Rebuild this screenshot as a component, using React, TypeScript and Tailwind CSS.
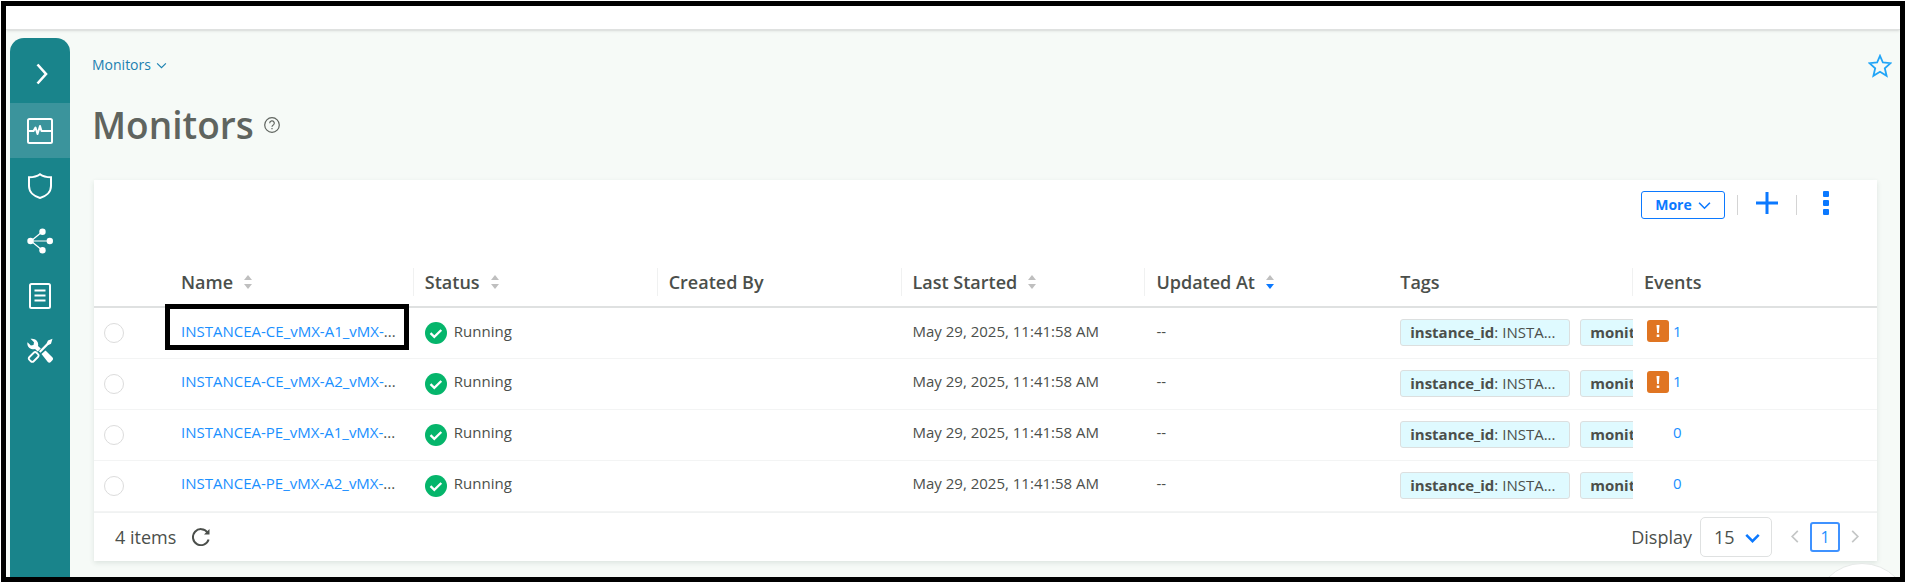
import type { ReactNode } from 'react';

interface Monitor {
  name: string;
  started: string;
  events: number;
}

const monitors: Monitor[] = [
  { name: 'INSTANCEA-CE_vMX-A1_vMX-', started: 'May 29, 2025, 11:41:58 AM', events: 1 },
  { name: 'INSTANCEA-CE_vMX-A2_vMX-', started: 'May 29, 2025, 11:41:58 AM', events: 1 },
  { name: 'INSTANCEA-PE_vMX-A1_vMX-', started: 'May 29, 2025, 11:41:58 AM', events: 0 },
  { name: 'INSTANCEA-PE_vMX-A2_vMX-', started: 'May 29, 2025, 11:41:58 AM', events: 0 },
];

interface Column {
  label: string;
  sort?: 'none' | 'desc';
  divider?: boolean;
}

const columns: Column[] = [
  { label: 'Name', sort: 'none', divider: true },
  { label: 'Status', sort: 'none', divider: true },
  { label: 'Created By', divider: true },
  { label: 'Last Started', sort: 'none', divider: true },
  { label: 'Updated At', sort: 'desc' },
  { label: 'Tags', divider: true },
  { label: 'Events' },
];

function Chevron({ className, width = 2 }: { className: string; width?: number }) {
  return (
    <svg className={className} viewBox="0 0 12 8" fill="none" stroke="currentColor" strokeWidth={width}>
      <path d="M1 1.5l5 5 5-5" />
    </svg>
  );
}

function SortIcon({ sort }: { sort: 'none' | 'desc' }) {
  return (
    <svg className="h-[14px] w-[10px]" viewBox="0 0 10 14">
      <path d="M5 0l4 5H1z" fill="#bfbfbf" />
      <path d="M5 14L1 9h8z" fill={sort === 'desc' ? '#0b79ff' : '#bfbfbf'} />
    </svg>
  );
}

function SideItem({ label, active, children }: { label: string; active?: boolean; children: ReactNode }) {
  return (
    <a
      href="#"
      aria-label={label}
      className={`flex h-[55px] items-center justify-center text-white ${active ? 'bg-[#3b949c]' : ''}`}
    >
      {children}
    </a>
  );
}

function Sidebar() {
  return (
    <nav className="flex w-[60px] shrink-0 flex-col rounded-t-[14px] bg-[#19848b]">
      <button type="button" aria-label="Expand" className="flex h-[65px] items-center justify-center pt-[6px] pl-1 text-white">
        <svg className="h-[22px] w-[12px]" viewBox="0 0 12 22" fill="none" stroke="currentColor" strokeWidth="2.6">
          <path d="M1.5 1.500L10 11l-8.500 9.500" />
        </svg>
      </button>
      <SideItem label="Monitors" active>
        <svg className="h-[26px] w-[26px]" viewBox="0 0 26 26" fill="none" stroke="currentColor" strokeWidth="2">
          <rect x="1" y="1" width="24" height="24" rx="1.500" />
          <path d="M1 13h5.500l2-3.500 2 6.500 2.500-8 1.500 5H25" strokeLinejoin="round" />
        </svg>
      </SideItem>
      <SideItem label="Security">
        <svg className="h-[26px] w-[24px]" viewBox="0 0 24 26" fill="none" stroke="currentColor" strokeWidth="2">
          <path d="M12 1.200c3 2.200 7 3 11 3V13c0 6.500-5.500 10.500-11 12C6.500 23.500 1 19.500 1 13V4.200c4 0 8-.8 11-3z" />
        </svg>
      </SideItem>
      <SideItem label="Topology">
        <svg className="h-[26px] w-[26px]" viewBox="0 0 26 26" stroke="currentColor" fill="currentColor">
          <path d="M4 13L15.500 3.500M4 13h18M4 13l11.500 9.500" strokeWidth="1.200" />
          <g stroke="none">
            <circle cx="3.500" cy="13" r="3.200" />
            <circle cx="15.500" cy="3.700" r="3.200" />
            <circle cx="22.800" cy="13" r="3.200" />
            <circle cx="15.500" cy="22.300" r="3.200" />
          </g>
        </svg>
      </SideItem>
      <SideItem label="Reports">
        <svg className="h-[26px] w-[22px]" viewBox="0 0 22 26" fill="none" stroke="currentColor" strokeWidth="2">
          <rect x="1" y="1" width="20" height="24" rx="1.500" />
          <path d="M5.500 7.500h11M5.500 12.500h11M5.500 17.500h11" strokeWidth="2.200" />
        </svg>
      </SideItem>
      <SideItem label="Tools">
        <svg className="h-[26px] w-[26px]" viewBox="0 0 26 26">
          <path
            fill="currentColor"
            d="M3.500.8L7 4.300 6.500 7 3.900 7.500.5 4.200C-.3 7.500 1.800 11 5.500 11.300c1 .1 1.800-.1 2.500-.4l2.800 2.700 3-3-2.800-2.700c1-3.800-2-8-7.500-7.100z"
          />
          <path fill="currentColor" d="M14.500 16l4-3.500 6.800 6.800c1 1 1 2 .1 3l-1.600 1.600c-1 1-2 1-3 0z" />
          <path fill="currentColor" d="M25.500.8l-1.500 5-3 1.400-7.500 7.500-1.600-1.500 7.600-7.600 1.500-3z" />
          <rect x="1.700" y="16" width="10" height="6" rx="2" transform="rotate(-45 6.700 19)" fill="none" stroke="currentColor" strokeWidth="1.800" />
        </svg>
      </SideItem>
    </nav>
  );
}

function Toolbar() {
  return (
    <div className="flex h-[88px] items-start justify-end pt-[11px] pr-12 text-[#0b79ff]">
      <button
        type="button"
        className="flex h-7 w-[84px] items-center justify-center gap-[6px] rounded-[3px] border border-[#0b79ff] text-sm font-bold"
      >
        More
        <Chevron className="h-[9px] w-[13px]" width={1.5} />
      </button>
      <div className="mt-1 ml-3 h-5 w-px bg-[#d4d4d4]" />
      <button type="button" aria-label="Add" className="ml-[18px]">
        <svg className="h-6 w-[22px]" viewBox="0 0 22 24" stroke="currentColor" strokeWidth="3">
          <path d="M0 12h22M11 1v22" />
        </svg>
      </button>
      <div className="mt-1 ml-[18px] h-5 w-px bg-[#d4d4d4]" />
      <button type="button" aria-label="Options" className="ml-[26px]">
        <svg className="h-6 w-[6px]" viewBox="0 0 6 24" fill="currentColor">
          <rect y="0" width="6" height="6" rx="1" />
          <rect y="9" width="6" height="6" rx="1" />
          <rect y="18" width="6" height="6" rx="1" />
        </svg>
      </button>
    </div>
  );
}

function Tag({ name, value }: { name: string; value?: string }) {
  return (
    <div className="h-[27px] w-[170px] shrink-0 rounded-[3px] border border-[#dcdfdf] bg-[#dffaff] px-[9px] leading-[25px] whitespace-nowrap">
      <b>{name}</b>
      {value && `: ${value}`}
    </div>
  );
}

function MonitorRow({ monitor, highlighted }: { monitor: Monitor; highlighted: boolean }) {
  return (
    <tr className="h-[51px] border-b border-[#f3f4f4] text-[15px] text-[#4b4f4b]">
      <td>
        <input
          type="radio"
          name="monitor"
          aria-label={monitor.name}
          className="ml-[10px] block h-5 w-5 appearance-none rounded-full border border-[#dcdcdc] bg-white"
        />
      </td>
      <td className="relative pb-1 pl-[11px] whitespace-nowrap">
        <a href="#" className="text-[#1a90ff]">
          {monitor.name}
        </a>
        ...
        {highlighted && (
          <div className="pointer-events-none absolute -top-1 right-[5px] -left-[5px] h-[46px] border-[5px] border-black" />
        )}
      </td>
      <td className="pl-[11px]">
        <div className="flex items-center gap-[7px]">
          <svg className="h-[22px] w-[22px]" viewBox="0 0 22 22">
            <circle cx="11" cy="11" r="11" fill="#05b56b" />
            <path d="M5.500 11.200l3.800 3.600 7-6.800" fill="none" stroke="#fff" strokeWidth="2.300" />
          </svg>
          <span className="pb-1">Running</span>
        </div>
      </td>
      <td />
      <td className="pb-1 pl-[11px] whitespace-nowrap">{monitor.started}</td>
      <td className="pb-1 pl-[11px]">--</td>
      <td className="pl-[11px]">
        <div className="flex gap-[10px] overflow-hidden">
          <Tag name="instance_id" value="INSTA..." />
          <Tag name="monitor" />
        </div>
      </td>
      <td className="pb-1 pl-[14px]">
        <div className="flex items-center gap-1">
          <div className="h-[22px] w-[22px]">
            {monitor.events > 0 && (
              <svg className="h-[22px] w-[22px]" viewBox="0 0 22 22">
                <rect width="22" height="22" rx="3" fill="#e07522" />
                <path d="M9.500 5h3l-.6 8h-1.800z" fill="#fff" />
                <rect x="9.700" y="14.500" width="2.600" height="2.500" fill="#fff" />
              </svg>
            )}
          </div>
          <a href="#" className="text-[#1a90ff]">
            {monitor.events}
          </a>
        </div>
      </td>
    </tr>
  );
}

function Footer() {
  return (
    <div className="flex h-[49px] items-center border-t border-[#f0f2f2] pr-[15px] pl-[21px] text-lg text-[#4b4f4b]">
      <span>4 items</span>
      <button type="button" aria-label="Refresh" className="ml-4">
        <svg className="h-[18px] w-[18px]" viewBox="0 0 18 18" fill="none" stroke="currentColor" strokeWidth="2">
          <path d="M15.500 4.500A8 8 0 1 0 16.600 11.500" />
          <path d="M17.500 1v5.500H12z" fill="currentColor" stroke="none" />
        </svg>
      </button>
      <label htmlFor="page-size" className="ml-auto">
        Display
      </label>
      <div className="relative ml-2 h-10 w-[72px]">
        <select id="page-size" className="h-10 w-[72px] appearance-none rounded-[5px] border border-[#dfe1e1] bg-white pl-[13px]">
          <option>15</option>
        </select>
        <Chevron className="pointer-events-none absolute top-4 right-3 h-[10px] w-[15px] text-[#0b79ff]" />
      </div>
      <button type="button" aria-label="Previous page" className="ml-4 text-[#c4c6c6]">
        <Chevron className="h-[9px] w-[14px] rotate-90" width={1.5} />
      </button>
      <button
        type="button"
        className="ml-2 flex h-[30px] w-[30px] items-center justify-center rounded-[3px] border-2 border-[#3f92ff] text-base text-[#1a90ff]"
      >
        1
      </button>
      <button type="button" aria-label="Next page" className="ml-2 text-[#c4c6c6]">
        <Chevron className="h-[9px] w-[14px] -rotate-90" width={1.5} />
      </button>
    </div>
  );
}

export default function App() {
  return (
    <div className="h-screen bg-white p-px font-['Open_Sans','Noto_Sans',sans-serif]">
      <div className="relative flex h-full flex-col overflow-hidden border-[5px] border-black bg-[#f6faf7]">
        <header className="h-6 shrink-0 border-b border-[#dfe1e0] bg-white shadow-sm" />
        <div className="flex grow pt-2 pl-1">
          <Sidebar />
          <main className="grow pr-[23px] pl-[22px]">
            <div className="flex h-14 items-center justify-between">
              <button type="button" className="flex items-center gap-[5px] pb-[2px] text-sm text-[#1b80b0]">
                Monitors
                <Chevron className="h-[7px] w-[11px]" width={1.3} />
              </button>
              <button type="button" aria-label="Favorite" className="-mr-[15px] text-[#22a5f7]">
                <svg className="h-6 w-6" viewBox="0 0 24 24" fill="none" stroke="currentColor" strokeWidth="1.800">
                  <path d="M12 1.800l2.900 6.700 7.600.7-5.700 5 1.800 7.600-6.600-4-6.600 4 1.800-7.600-5.700-5 7.600-.7z" />
                </svg>
              </button>
            </div>
            <div className="flex h-[86px] items-start gap-[10px]">
              <h1 className="text-[37px] leading-[62px] font-semibold text-[#5f645f]">Monitors</h1>
              <svg className="mt-[23px] h-4 w-4 text-[#5f645f]" viewBox="0 0 16 16" fill="none" stroke="currentColor" strokeWidth="1.200">
                <circle cx="8" cy="8" r="7.300" />
                <path d="M5.700 6.300a2.300 2.300 0 1 1 3.300 2c-.7.400-1 .7-1 1.500M8 11v1.300" />
              </svg>
            </div>
            <section className="ml-[2px] bg-white shadow-[0_2px_5px_rgba(40,70,60,0.12)]">
              <Toolbar />
              <table className="w-full table-fixed border-collapse text-left">
                <colgroup>
                  <col className="w-[76px]" />
                  {columns.map((c) => (
                    <col key={c.label} />
                  ))}
                </colgroup>
                <thead>
                  <tr className="h-[39px] border-b-2 border-[#dfe1e1] align-top text-lg text-[#4b4f4b]">
                    <td />
                    {columns.map((c) => (
                      <th key={c.label} className="p-0 font-semibold">
                        <div className={`flex h-7 items-center gap-[10px] border-r pl-[11px] ${c.divider ? 'border-[#f0f1f1]' : 'border-transparent'}`}>
                          {c.label}
                          {c.sort && <SortIcon sort={c.sort} />}
                        </div>
                      </th>
                    ))}
                  </tr>
                </thead>
                <tbody>
                  {monitors.map((m, i) => (
                    <MonitorRow key={m.name} monitor={m} highlighted={i === 0} />
                  ))}
                </tbody>
              </table>
              <Footer />
            </section>
          </main>
        </div>
        {/* floating help bubble, mostly below the fold */}
        <div className="absolute -right-[10px] -bottom-[82px] h-24 w-24 rounded-full border border-[#e6e9e8] bg-white" />
      </div>
    </div>
  );
}
